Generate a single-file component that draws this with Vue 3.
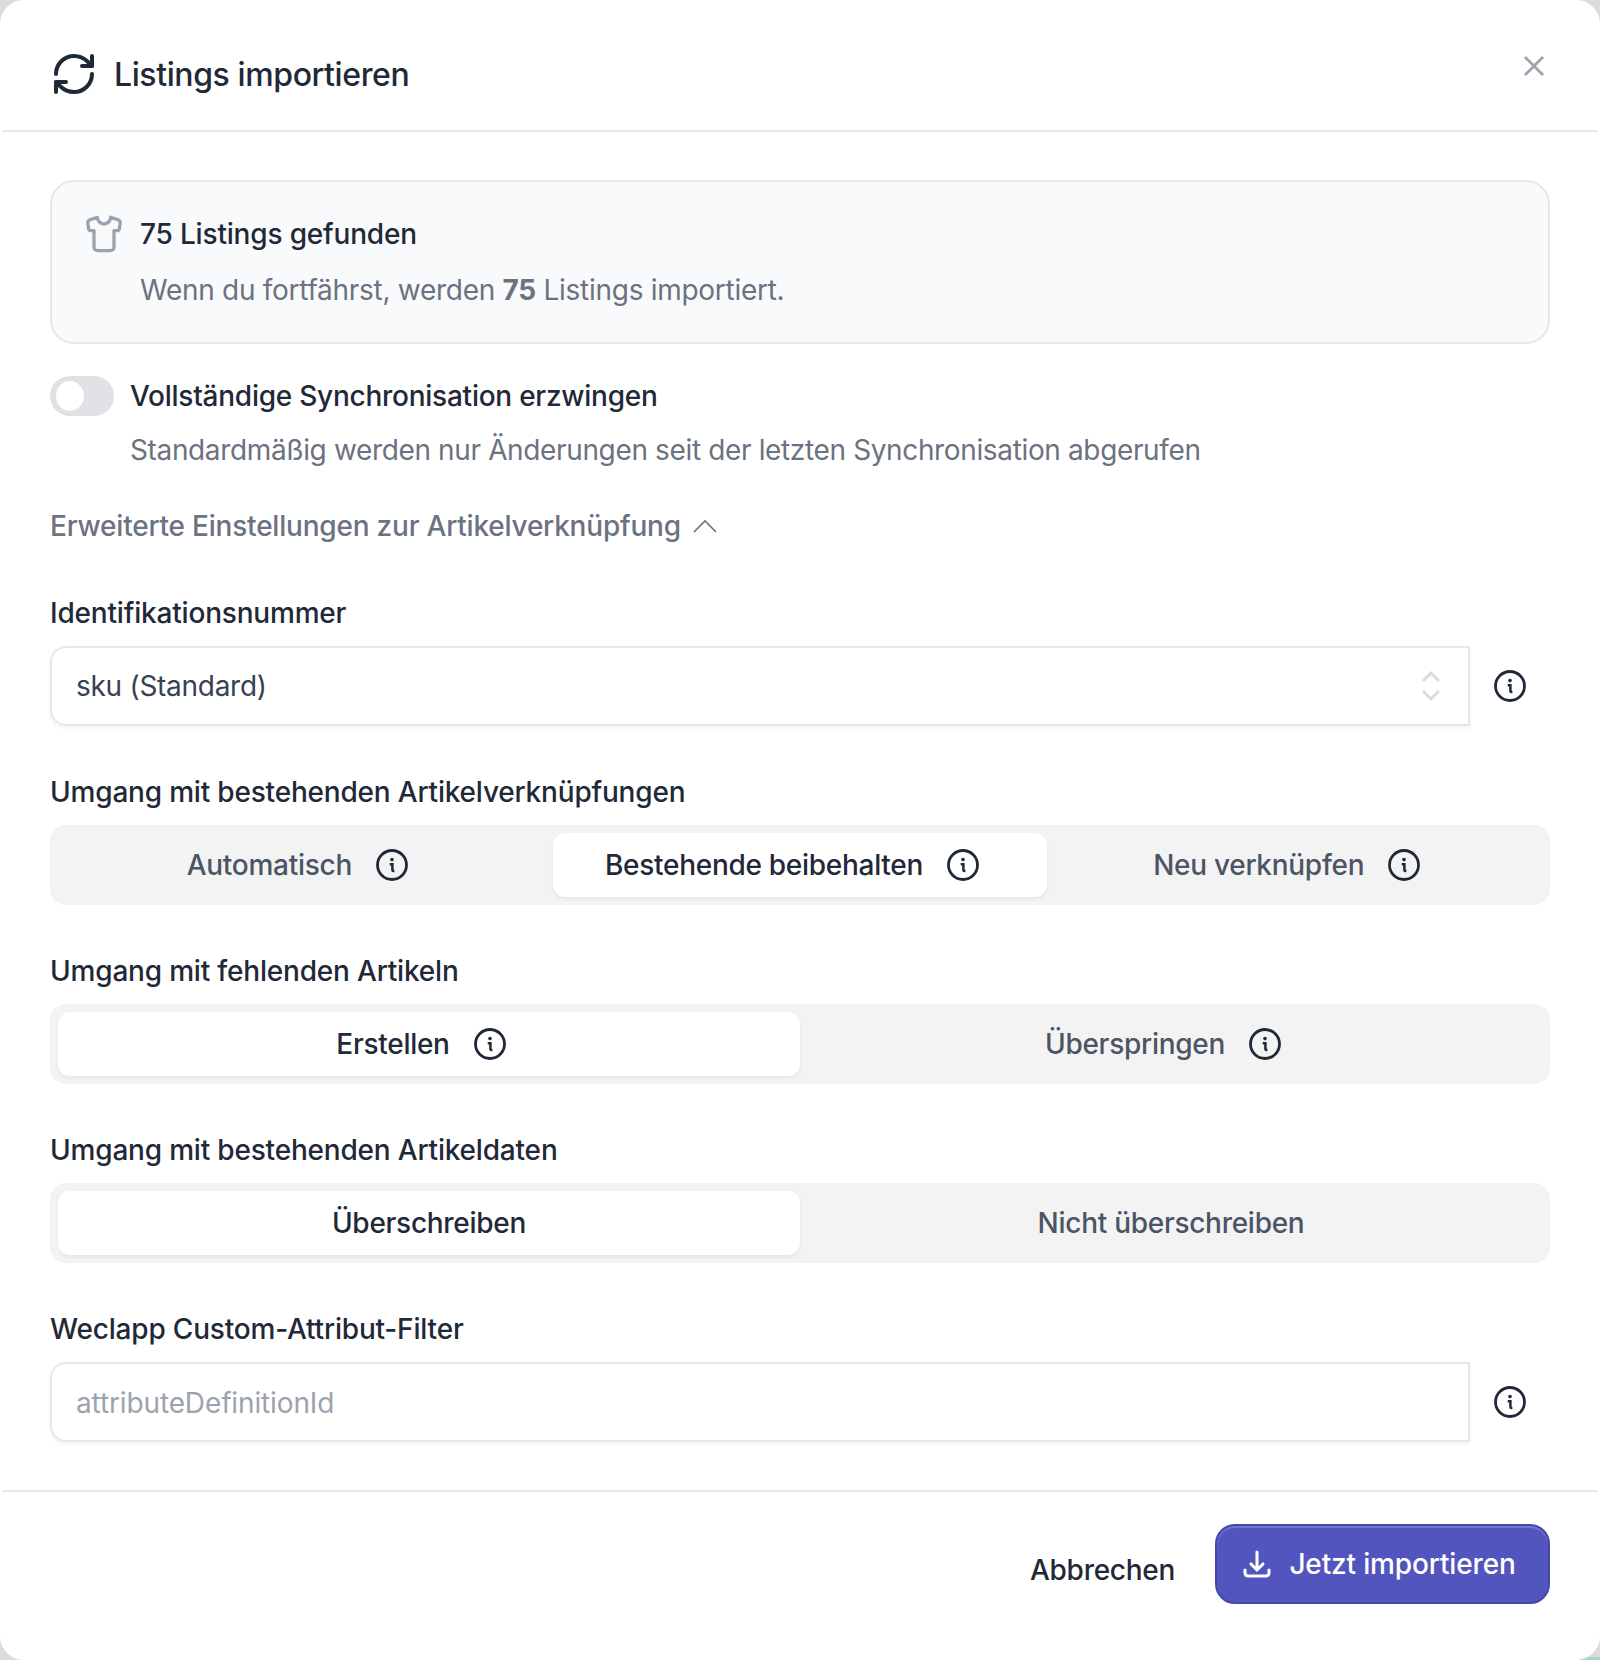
<script setup>
const segs = [
  { label: 'Umgang mit bestehenden Artikelverknüpfungen', opts: [
    { t: 'Automatisch', info: true }, { t: 'Bestehende beibehalten', info: true, on: true }, { t: 'Neu verknüpfen', info: true } ] },
  { label: 'Umgang mit fehlenden Artikeln', opts: [
    { t: 'Erstellen', info: true, on: true }, { t: 'Überspringen', info: true } ] },
  { label: 'Umgang mit bestehenden Artikeldaten', opts: [
    { t: 'Überschreiben', on: true }, { t: 'Nicht überschreiben' } ] },
]
</script>

<template>
  <div class="modal">
    <header class="head">
      <div class="title-row">
        <svg class="i48" viewBox="0 0 24 24" fill="none" stroke="#1f2937" stroke-width="2" stroke-linecap="round" stroke-linejoin="round">
          <path d="M3 12a9 9 0 0 1 9-9 9.75 9.75 0 0 1 6.74 2.74L21 8" />
          <path d="M21 3v5h-5" />
          <path d="M21 12a9 9 0 0 1-9 9 9.75 9.75 0 0 1-6.74-2.74L3 16" />
          <path d="M8 16H3v5" />
        </svg>
        <h2 class="title">Listings importieren</h2>
      </div>
      <svg class="close" viewBox="0 0 20 20" fill="none" stroke="#9ca3af" stroke-width="2.8">
        <path d="M1 1l18 18M19 1L1 19" />
      </svg>
    </header>

    <main class="body">
      <section class="card">
        <div class="card-top">
          <svg class="shirt" viewBox="0 0 24 24" fill="none" stroke="#9ca3af" stroke-width="2" stroke-linecap="round" stroke-linejoin="round">
            <path d="M20.38 3.46 16 2a4 4 0 0 1-8 0L3.62 3.46a2 2 0 0 0-1.34 2.23l.58 3.47a1 1 0 0 0 .99.84H6v10c0 1.1.9 2 2 2h8a2 2 0 0 0 2-2V10h2.15a1 1 0 0 0 .99-.84l.58-3.47a2 2 0 0 0-1.34-2.23z" />
          </svg>
          <span class="card-title">75 Listings gefunden</span>
        </div>
        <p class="card-sub">Wenn du fortfährst, werden <b>75</b> Listings importiert.</p>
      </section>

      <section class="sync">
        <div class="sync-row">
          <span class="toggle"><span class="knob"></span></span>
          <span class="sync-label">Vollständige Synchronisation erzwingen</span>
        </div>
        <p class="sync-desc">Standardmäßig werden nur Änderungen seit der letzten Synchronisation abgerufen</p>
      </section>

      <div class="advanced">
        <span>Erweiterte Einstellungen zur Artikelverknüpfung</span>
        <svg class="chev" viewBox="0 0 24 14" fill="none" stroke="#6b7280" stroke-width="1.6">
          <path d="M1 13L12 2l11 11" />
        </svg>
      </div>

      <div class="field first">
        <label class="label">Identifikationsnummer</label>
        <div class="input-row">
          <div class="input">
            <span class="val">sku (Standard)</span>
            <svg class="updown" viewBox="0 0 18 30" fill="none" stroke="#d9d9d9" stroke-width="2.8">
              <path d="M1 10l8-8 8 8M1 20l8 8 8-8" />
            </svg>
          </div>
          <svg class="info" viewBox="0 0 32 32" fill="none" stroke="#1f2937" stroke-width="2.8">
            <circle cx="16" cy="16" r="14.5" />
            <path d="M13.7 15.2h2.7v5.8q0 1.1 1 1.1h1" stroke-width="2.5" />
            <circle cx="16" cy="10.6" r="1.8" fill="#1f2937" stroke="none" />
          </svg>
        </div>
      </div>

      <div v-for="s in segs" :key="s.label" class="field">
        <label class="label">{{ s.label }}</label>
        <div class="seg">
          <div v-for="o in s.opts" :key="o.t" class="tab" :class="{ on: o.on }">
            <span>{{ o.t }}</span>
            <svg v-if="o.info" class="info tab-info" viewBox="0 0 32 32" fill="none" stroke="#1f2937" stroke-width="2.8">
              <circle cx="16" cy="16" r="14.5" />
              <path d="M13.7 15.2h2.7v5.8q0 1.1 1 1.1h1" stroke-width="2.5" />
              <circle cx="16" cy="10.6" r="1.8" fill="#1f2937" stroke="none" />
            </svg>
          </div>
        </div>
      </div>

      <div class="field">
        <label class="label">Weclapp Custom-Attribut-Filter</label>
        <div class="input-row">
          <div class="input"><span class="ph">attributeDefinitionId</span></div>
          <svg class="info" viewBox="0 0 32 32" fill="none" stroke="#1f2937" stroke-width="2.8">
            <circle cx="16" cy="16" r="14.5" />
            <path d="M13.7 15.2h2.7v5.8q0 1.1 1 1.1h1" stroke-width="2.5" />
            <circle cx="16" cy="10.6" r="1.8" fill="#1f2937" stroke="none" />
          </svg>
        </div>
      </div>
    </main>

    <footer class="foot">
      <span class="cancel">Abbrechen</span>
      <button class="primary">
        <svg class="dl" viewBox="0 0 24 24" fill="none" stroke="#fff" stroke-width="2.3" stroke-linecap="round" stroke-linejoin="round">
          <path d="M3 16.5v2.25A2.25 2.25 0 0 0 5.25 21h13.5A2.25 2.25 0 0 0 21 18.75V16.5M16.5 12 12 16.5m0 0L7.5 12m4.5 4.5V3" />
        </svg>
        <span>Jetzt importieren</span>
      </button>
    </footer>
  </div>
</template>

<style>
html { background: linear-gradient(#a8d5bd, #a8d5bd) no-repeat right bottom / 40px 3px, #dcdcdc; }
body { margin: 0; }
</style>

<style scoped>
.modal {
  box-sizing: border-box;
  width: 1600px;
  height: 1660px;
  background: #fff;
  border-radius: 24px;
  padding: 0 2px;
  font-family: Inter, "Liberation Sans", sans-serif;
  color: #1f2937;
  overflow: hidden;
  letter-spacing: -0.28px;
}
.head {
  box-sizing: border-box;
  height: 132px;
  border-bottom: 2px solid #e5e7eb;
  display: flex;
  justify-content: space-between;
  padding: 50px 54px 0 48px;
}
.title-row { display: flex; align-items: flex-start; height: 48px; gap: 16px; }
.i48 { width: 48px; height: 48px; flex: none; }
.title { margin: 1px 0 0; font-size: 32px; font-weight: 500; line-height: 48px; letter-spacing: -0.4px; }
.close { width: 20px; height: 20px; margin-top: 6px; }
.body { padding: 48px 48px 0; height: 1360px; box-sizing: border-box; border-bottom: 2px solid #e5e7eb; }
.card {
  box-sizing: border-box;
  height: 164px;
  border: 2px solid #e5e7eb;
  border-radius: 24px;
  background: #f9fafb;
  padding: 32px 32px 0;
}
.card-top { display: flex; align-items: center; gap: 16px; height: 40px; }
.shirt { width: 40px; height: 40px; flex: none; }
.card-title { font-size: 28px; font-weight: 500; letter-spacing: -0.18px; }
.card-sub { margin: 16px 0 0 56px; font-size: 28px; line-height: 40px; color: #6b7280; letter-spacing: -0.28px; }
.card-sub b { font-weight: 700; }
.sync { margin-top: 32px; }
.sync-row { display: flex; align-items: center; gap: 16px; height: 40px; }
.toggle { width: 64px; height: 40px; border-radius: 20px; background: #dfe1e4; padding: 5px 6px; box-sizing: border-box; flex: none; }
.knob { display: block; width: 28px; height: 30px; border-radius: 50%; background: #fff; }
.sync-label { font-size: 28px; font-weight: 500; letter-spacing: -0.25px; }
.sync-desc { margin: 14px 0 0 80px; font-size: 28px; line-height: 40px; color: #6b7280; letter-spacing: -0.36px; }
.advanced { display: flex; align-items: center; gap: 12px; margin-top: 36px; height: 40px; font-size: 28px; font-weight: 500; color: #6b7280; letter-spacing: -0.21px; }
.chev { width: 24px; height: 14px; }
.field { margin-top: 46px; }
.field.first { margin-top: 47px; }
.label { display: block; font-size: 28px; font-weight: 500; line-height: 40px; margin-bottom: 13px; letter-spacing: -0.19px; }
.input-row { display: flex; align-items: center; gap: 24px; }
.input {
  box-sizing: border-box;
  width: 1420px;
  height: 80px;
  border: 2px solid #e5e7eb;
  border-radius: 16px 0 0 16px;
  box-shadow: 0 2px 4px rgba(0,0,0,.05);
  display: flex;
  align-items: center;
  justify-content: space-between;
  padding: 0 28px 0 24px;
  font-size: 28px;
}
.val { color: #374151; }
.ph { color: #9ca3af; letter-spacing: -0.13px; position: relative; top: 1px; }
.updown { width: 18px; height: 30px; }
.info { width: 32px; height: 32px; flex: none; }
.tab-info { margin-right: 16px; }
.seg {
  box-sizing: border-box;
  height: 80px;
  background: #f3f3f4;
  border-radius: 16px;
  padding: 8px;
  display: flex;
}
.tab {
  flex: 1 1 0;
  display: flex;
  align-items: center;
  justify-content: center;
  gap: 24px;
  border-radius: 12px;
  font-size: 28px;
  font-weight: 500;
  color: #4b5563;
}
.tab.on { background: #fff; color: #1f2937; box-shadow: 0 2px 4px rgba(0,0,0,.06); }
.foot {
  display: flex;
  justify-content: flex-end;
  align-items: center;
  padding: 32px 48px 0;
  gap: 40px;
}
.cancel { font-size: 28px; font-weight: 500; position: relative; top: 6px; }
.primary {
  box-sizing: border-box;
  height: 80px;
  width: 335px;
  padding: 0 8px 0 0;
  border: 2px solid #4449a8;
  border-radius: 20px;
  background: #5155bd;
  box-shadow: inset 0 2px 0 rgba(255,255,255,.2);
  color: #fff;
  font: 500 28px Inter, "Liberation Sans", sans-serif;
  letter-spacing: -0.15px;
  display: flex;
  align-items: center;
  justify-content: center;
  gap: 16px;
}
.dl { width: 32px; height: 32px; }
</style>
